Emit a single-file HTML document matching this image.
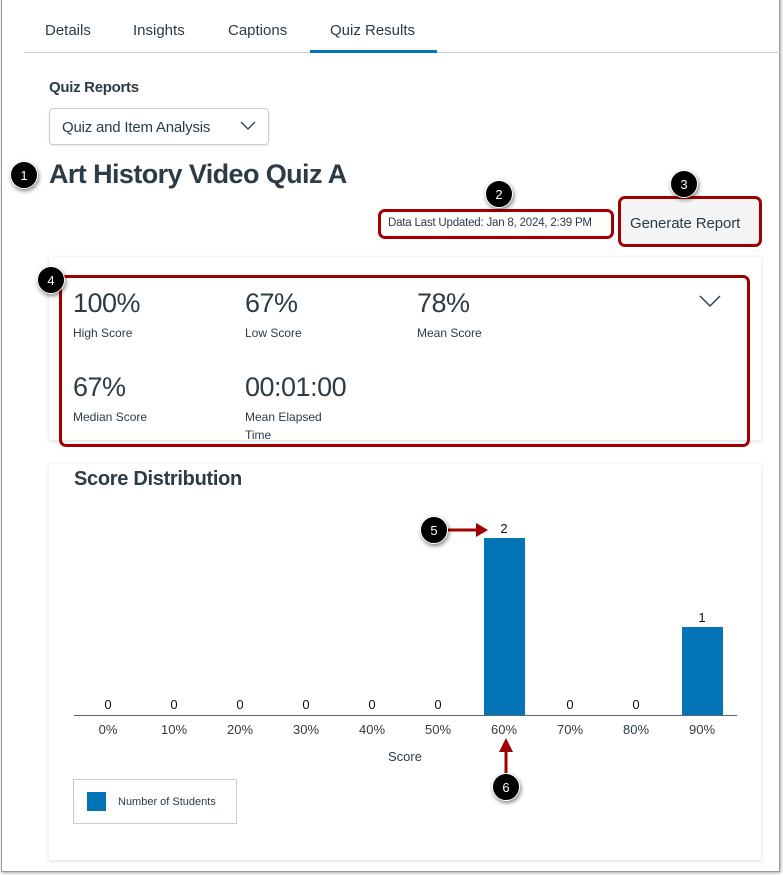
<!DOCTYPE html>
<html><head><style>
*{margin:0;padding:0;box-sizing:border-box}
body{width:783px;height:875px;background:#fff;font-family:"Liberation Sans",sans-serif;color:#2d3b45;position:relative;overflow:hidden}
.a{position:absolute;white-space:nowrap}
.frame{position:absolute;left:1px;top:-2px;width:779px;height:874px;border:1px solid #9a9a9a;box-shadow:1px 1px 3px rgba(0,0,0,.35)}
.badge{position:absolute;width:28px;height:28px;border-radius:50%;background:#000;color:#fff;font-size:13px;text-align:center;line-height:28px;box-shadow:1px 2px 4px rgba(0,0,0,.5);border:1px solid #fff}
.red{position:absolute;border:3px solid #a00000;border-radius:7px}
.card{position:absolute;background:#fff;box-shadow:0 1px 4px rgba(0,0,0,.15)}
.big{font-size:27px;color:#2d3b45;letter-spacing:-0.5px}
.lbl{font-size:12px;color:#2d3b45}
.n{font-size:13px;width:40px;text-align:center;color:#111}
.t{font-size:13px;width:50px;text-align:center;color:#2d3b45}
.bar{position:absolute;background:#0374b5;width:41px}
</style></head><body>
<div class="frame"></div>
<div class="a" style="left:45px;top:22px;font-size:15px">Details</div>
<div class="a" style="left:133px;top:22px;font-size:15px">Insights</div>
<div class="a" style="left:228px;top:22px;font-size:15px">Captions</div>
<div class="a" style="left:330px;top:22px;font-size:15px">Quiz Results</div>
<div class="a" style="left:24px;top:52px;width:757px;height:1px;background:#c7cdd1"></div>
<div class="a" style="left:310px;top:50px;width:127px;height:3px;background:#0374b5"></div>
<div class="a" style="left:49px;top:79px;font-size:15px;font-weight:bold;letter-spacing:-0.3px">Quiz Reports</div>
<div class="a" style="left:49px;top:108px;width:220px;height:37px;border:1px solid #c7cdd1;border-radius:4px;box-shadow:0 1px 2px rgba(0,0,0,.1)"></div>
<div class="a" style="left:62px;top:119px;font-size:15px;letter-spacing:-0.2px">Quiz and Item Analysis</div>
<svg class="a" style="left:240px;top:121px" width="16" height="10"><path d="M1 1l7 7 7-7" fill="none" stroke="#2d3b45" stroke-width="1.3"/></svg>
<div class="a" style="left:49px;top:159px;font-size:27px;font-weight:bold;letter-spacing:-0.6px">Art History Video Quiz A</div>
<div class="a" style="left:388px;top:217px;font-size:11.5px;letter-spacing:-0.2px">Data Last Updated: Jan 8, 2024, 2:39 PM</div>
<div class="red" style="left:378px;top:209px;width:236px;height:30px"></div>
<div class="a" style="left:620px;top:198px;width:139px;height:46px;background:#f5f5f5;border-radius:5px"></div>
<div class="a" style="left:630px;top:215px;font-size:15px;letter-spacing:-0.1px">Generate Report</div>
<div class="red" style="left:618px;top:196px;width:144px;height:51px"></div>

<div class="card" style="left:49px;top:257px;width:712px;height:183px"></div>
<div class="a big" style="left:73px;top:288px">100%</div>
<div class="a lbl" style="left:73px;top:326px">High Score</div>
<div class="a big" style="left:245px;top:288px">67%</div>
<div class="a lbl" style="left:245px;top:326px">Low Score</div>
<div class="a big" style="left:417px;top:288px">78%</div>
<div class="a lbl" style="left:417px;top:326px">Mean Score</div>
<svg class="a" style="left:699px;top:295px" width="22" height="13"><path d="M1 1l10 10 10-10" fill="none" stroke="#2d3b45" stroke-width="1.4"/></svg>
<div class="a big" style="left:73px;top:372px">67%</div>
<div class="a lbl" style="left:73px;top:410px">Median Score</div>
<div class="a big" style="left:245px;top:372px">00:01:00</div>
<div class="a lbl" style="left:245px;top:410px">Mean Elapsed</div>
<div class="a lbl" style="left:245px;top:428px">Time</div>
<div class="red" style="left:59px;top:275px;width:691px;height:172px"></div>

<div class="card" style="left:49px;top:464px;width:712px;height:396px"></div>
<div class="a" style="left:74px;top:468px;font-size:20px;font-weight:bold;letter-spacing:-0.3px">Score Distribution</div>
<div class="bar" style="left:484px;top:538px;height:177px"></div>
<div class="bar" style="left:682px;top:627px;height:88px"></div>
<div class="a" style="left:74px;top:715px;width:663px;height:1px;background:#5a6670"></div>
<div class="a n" style="left:88px;top:697px">0</div>
<div class="a n" style="left:154px;top:697px">0</div>
<div class="a n" style="left:220px;top:697px">0</div>
<div class="a n" style="left:286px;top:697px">0</div>
<div class="a n" style="left:352px;top:697px">0</div>
<div class="a n" style="left:418px;top:697px">0</div>
<div class="a n" style="left:484px;top:521px">2</div>
<div class="a n" style="left:550px;top:697px">0</div>
<div class="a n" style="left:616px;top:697px">0</div>
<div class="a n" style="left:682px;top:610px">1</div>
<div class="a t" style="left:83px;top:722px">0%</div>
<div class="a t" style="left:149px;top:722px">10%</div>
<div class="a t" style="left:215px;top:722px">20%</div>
<div class="a t" style="left:281px;top:722px">30%</div>
<div class="a t" style="left:347px;top:722px">40%</div>
<div class="a t" style="left:413px;top:722px">50%</div>
<div class="a t" style="left:479px;top:722px">60%</div>
<div class="a t" style="left:545px;top:722px">70%</div>
<div class="a t" style="left:611px;top:722px">80%</div>
<div class="a t" style="left:677px;top:722px">90%</div>
<div class="a" style="left:388px;top:749px;font-size:13px">Score</div>
<div class="a" style="left:73px;top:779px;width:164px;height:45px;border:1px solid #c7cdd1"></div>
<div class="a" style="left:87px;top:792px;width:19px;height:19px;background:#0374b5"></div>
<div class="a" style="left:118px;top:796px;font-size:11px">Number of Students</div>

<svg class="a" style="left:440px;top:520px" width="90" height="290"><path d="M8 10h30" stroke="#a00000" stroke-width="3"/><path d="M36 3l12 7-12 7z" fill="#a00000"/><path d="M66 260v-30" stroke="#a00000" stroke-width="3"/><path d="M59 232l7-14 7 14z" fill="#a00000"/></svg>
<div class="badge" style="left:10px;top:161px">1</div>
<div class="badge" style="left:485px;top:180px">2</div>
<div class="badge" style="left:670px;top:170px">3</div>
<div class="badge" style="left:37px;top:266px">4</div>
<div class="badge" style="left:420px;top:516px">5</div>
<div class="badge" style="left:492px;top:773px">6</div>
</body></html>
